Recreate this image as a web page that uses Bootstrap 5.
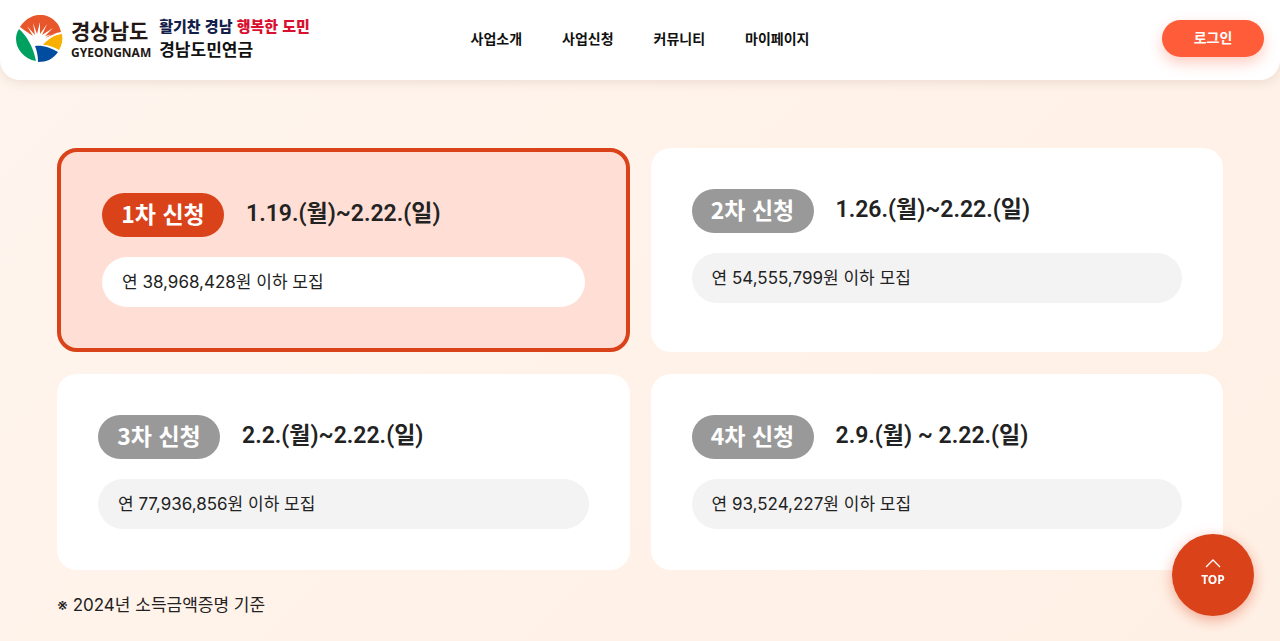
<!DOCTYPE html>
<html lang="ko">
<head>
<meta charset="utf-8">
<meta name="viewport" content="width=device-width, initial-scale=1">
<title>경남도민연금</title>
<link rel="stylesheet" href="https://cdn.jsdelivr.net/npm/bootstrap@5.3.0/dist/css/bootstrap.min.css">
<style>
  body {
    font-family: Inter, "Noto Sans CJK KR", sans-serif;
    color: #222;
    min-height: 100vh;
    background: linear-gradient(135deg, #fff5ee 0%, #fff2e9 50%, #fff0e5 100%);
  }
  .site-header {
    height: 80px;
    padding: 0 16px 4px;
    border-radius: 0 0 20px 20px;
    box-shadow: 0 2px 12px rgba(90, 50, 20, .12);
    font-family: "Noto Sans CJK KR", sans-serif;
  }
  .header-side { flex: 1 1 0; }
  .brand-ko { font-size: 21px; line-height: 30px; font-weight: 700; color: #231815; }
  .brand-en { font-family: "Noto Sans", sans-serif; font-size: 12px; line-height: 16px; font-weight: 700; color: #231815; }
  .slogan { font-size: 15px; line-height: 22px; font-weight: 900; color: #14204c; }
  .slogan em { font-style: normal; color: #d9102f; }
  .service { font-size: 17px; line-height: 24px; font-weight: 700; color: #111; }
  .main-menu { gap: 40px; }
  .main-menu a { font-size: 14px; line-height: 20px; font-weight: 700; color: #111; text-decoration: none; }
  .login-btn {
    width: 102px; height: 37px; padding: 0 0 2px;
    border: 0; border-radius: 20px;
    background: #ff5c39; color: #fff;
    font-size: 14px; font-weight: 700;
    box-shadow: 0 6px 14px rgba(255, 92, 57, .3);
  }
  main { padding: 68px 57px 24px; }
  .rounds { --bs-gutter-x: 21px; --bs-gutter-y: 22px; }
  .round-box { padding: 41px; border-radius: 20px; background: #fff; }
  .round-box.current { border: 4px solid #da4219; background: #ffded5; }
  .round-head { gap: 22px; margin-bottom: 20px; }
  .round-tag {
    width: 122px; height: 44px; border-radius: 22px;
    background: #999; color: #fff;
    font-family: "Noto Sans CJK KR", sans-serif;
    font-size: 23px; line-height: 40px; font-weight: 700;
  }
  .current .round-tag { background: #da4219; }
  .round-date { font-family: Roboto, "Noto Sans CJK KR", sans-serif; font-size: 23px; line-height: 42px; font-weight: 600; }
  .round-limit {
    height: 50px; padding: 0 20px; border-radius: 25px;
    background: #f3f3f3; font-size: 17px; line-height: 50px; font-weight: 400; color: #222;
  }
  .current .round-limit { background: #fff; }
  .basis { margin-top: 22px; font-size: 17px; line-height: 26px; font-weight: 400; color: #222; }
  .to-top {
    right: 26px; bottom: 25px; width: 82px; height: 82px; padding-bottom: 4px;
    background: #da4219; color: #fff; text-decoration: none;
    font-family: "Noto Sans", sans-serif; font-size: 12px; line-height: 16px; font-weight: 700;
    box-shadow: 0 4px 14px rgba(218, 66, 25, .4);
  }
</style>
</head>
<body>
<header class="site-header bg-white d-flex align-items-center">
  <div class="header-side d-flex align-items-center">
    <svg width="47" height="47" viewBox="0 0 47 47" aria-hidden="true">
      <path fill="#e8562b" d="M4 12C12-1 29-5 40 7C43 10 44 13 45 17C38 18 33 20 29 23L41 18L29 21L37 13L26 20L31 9L24 19L24 7L21 19L17 8L19 20L11 11L17 21L8 15Z"/>
      <path fill="#00a160" d="M3 14C10 20 17 31 20 46C8 44 0 34 0 24C0 20 1 17 3 14Z"/>
      <path fill="#f8b000" d="M46 19C47 25 46 30 43 35C38 32 33 30 27 30C32 24 38 20 46 19Z"/>
      <path fill="#004da0" d="M19 31C27 30 35 33 42 37C37 44 31 47 22 47C22 41 21 36 19 31Z"/>
    </svg>
    <div class="ms-2">
      <div class="brand-ko">경상남도</div>
      <div class="brand-en">GYEONGNAM</div>
    </div>
    <div class="ms-2">
      <div class="slogan">활기찬 경남 <em>행복한 도민</em></div>
      <div class="service">경남도민연금</div>
    </div>
  </div>
  <nav class="main-menu d-flex">
    <a href="#">사업소개</a>
    <a href="#">사업신청</a>
    <a href="#">커뮤니티</a>
    <a href="#">마이페이지</a>
  </nav>
  <div class="header-side d-flex justify-content-end">
    <button type="button" class="login-btn">로그인</button>
  </div>
</header>

<main>
  <div class="row rounds">
    <div class="col-6">
      <section class="round-box current h-100">
        <div class="round-head d-flex"><span class="round-tag text-center">1차 신청</span><span class="round-date">1.19.(월)~2.22.(일)</span></div>
        <div class="round-limit">연 38,968,428원 이하 모집</div>
      </section>
    </div>
    <div class="col-6">
      <section class="round-box h-100">
        <div class="round-head d-flex"><span class="round-tag text-center">2차 신청</span><span class="round-date">1.26.(월)~2.22.(일)</span></div>
        <div class="round-limit">연 54,555,799원 이하 모집</div>
      </section>
    </div>
    <div class="col-6">
      <section class="round-box h-100">
        <div class="round-head d-flex"><span class="round-tag text-center">3차 신청</span><span class="round-date">2.2.(월)~2.22.(일)</span></div>
        <div class="round-limit">연 77,936,856원 이하 모집</div>
      </section>
    </div>
    <div class="col-6">
      <section class="round-box h-100">
        <div class="round-head d-flex"><span class="round-tag text-center">4차 신청</span><span class="round-date">2.9.(월) ~ 2.22.(일)</span></div>
        <div class="round-limit">연 93,524,227원 이하 모집</div>
      </section>
    </div>
  </div>
  <p class="basis mb-0">※ 2024년 소득금액증명 기준</p>
</main>

<a href="#" class="to-top position-fixed rounded-circle d-flex flex-column align-items-center justify-content-center">
  <svg class="mb-1" width="16" height="10" viewBox="0 0 16 10" fill="none" stroke="#fff" stroke-width="1.3" aria-hidden="true"><path d="M1 9L8 2L15 9"/></svg>
  TOP
</a>
<script src="https://cdn.jsdelivr.net/npm/bootstrap@5.3.0/dist/js/bootstrap.bundle.min.js"></script>
</body>
</html>
